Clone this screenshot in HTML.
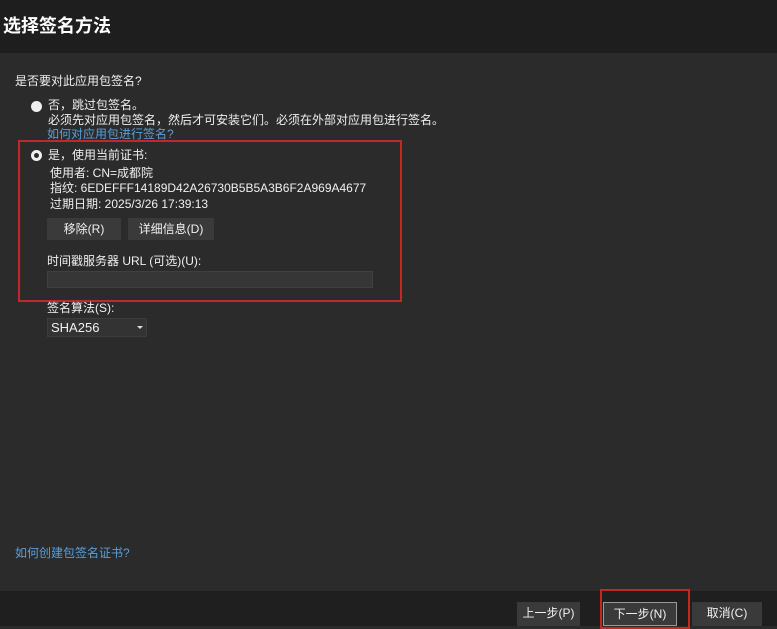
<!DOCTYPE html>
<html><head><meta charset="utf-8"><style>
*{margin:0;padding:0;box-sizing:border-box}
body{width:777px;height:626px;background:#2b2b2b;font-family:"Liberation Sans","Noto Sans CJK SC",sans-serif;color:#f0f0f0;font-size:12px;position:relative;overflow:hidden}
.hd{position:absolute;left:0;top:0;width:777px;height:53px;background:#1e1e1e}
.hd h1{position:absolute;left:3px;top:12px;font-size:18px;font-weight:bold;color:#fff}
.t{position:absolute;white-space:nowrap;line-height:15px}
.radio{position:absolute;width:11px;height:11px;border-radius:50%;background:#f0f0f0}
.radio.sel{background:#2b2b2b;border:3px solid #f0f0f0}
.link{color:#5a9fd8}
.btn{position:absolute;background:#3a3a3a;color:#f0f0f0;text-align:center;line-height:22px;height:22px}
.red{position:absolute;border:2px solid #c4262b}
.ft{position:absolute;left:0;top:591px;width:777px;height:35px;background:#1f1f1f}
</style></head><body>
<div class="hd"><h1>选择签名方法</h1></div>
<div class="t" style="left:15px;top:74px">是否要对此应用包签名?</div>
<div class="radio" style="left:31px;top:101px"></div>
<div class="t" style="left:48px;top:98px">否，跳过包签名。</div>
<div class="t" style="left:48px;top:113px">必须先对应用包签名，然后才可安装它们。必须在外部对应用包进行签名。</div>
<div class="t link" style="left:47px;top:127px">如何对应用包进行签名?</div>
<div class="radio sel" style="left:31px;top:150px"></div>
<div class="t" style="left:48px;top:148px">是，使用当前证书:</div>
<div class="t" style="left:50px;top:166px">使用者: CN=成都院</div>
<div class="t" style="left:50px;top:181px">指纹: 6EDEFFF14189D42A26730B5B5A3B6F2A969A4677</div>
<div class="t" style="left:50px;top:197px">过期日期: 2025/3/26 17:39:13</div>
<div class="btn" style="left:47px;top:218px;width:74px">移除(R)</div>
<div class="btn" style="left:128px;top:218px;width:86px">详细信息(D)</div>
<div class="t" style="left:47px;top:254px">时间戳服务器 URL (可选)(U):</div>
<div style="position:absolute;left:47px;top:271px;width:326px;height:17px;background:#363636;border:1px solid #404040"></div>
<div class="red" style="left:18px;top:140px;width:384px;height:162px"></div>
<div class="t" style="left:47px;top:301px">签名算法(S):</div>
<div style="position:absolute;left:47px;top:318px;width:100px;height:19px;background:#333;border:1px solid #3c3c3c"></div>
<div class="t" style="left:51px;top:320px;font-size:13px">SHA256</div>
<div style="position:absolute;left:137px;top:326px;border-left:3px solid transparent;border-right:3px solid transparent;border-top:3px solid #ddd"></div>
<div class="t link" style="left:15px;top:546px">如何创建包签名证书?</div>
<div class="ft"></div>
<div class="btn" style="left:517px;top:602px;width:63px;height:24px">上一步(P)</div>
<div class="btn" style="left:603px;top:602px;width:74px;height:24px;border:1px solid #999;line-height:22px">下一步(N)</div>
<div class="btn" style="left:692px;top:602px;width:70px;height:24px">取消(C)</div>
<div class="red" style="left:600px;top:589px;width:90px;height:40px"></div>
</body></html>
